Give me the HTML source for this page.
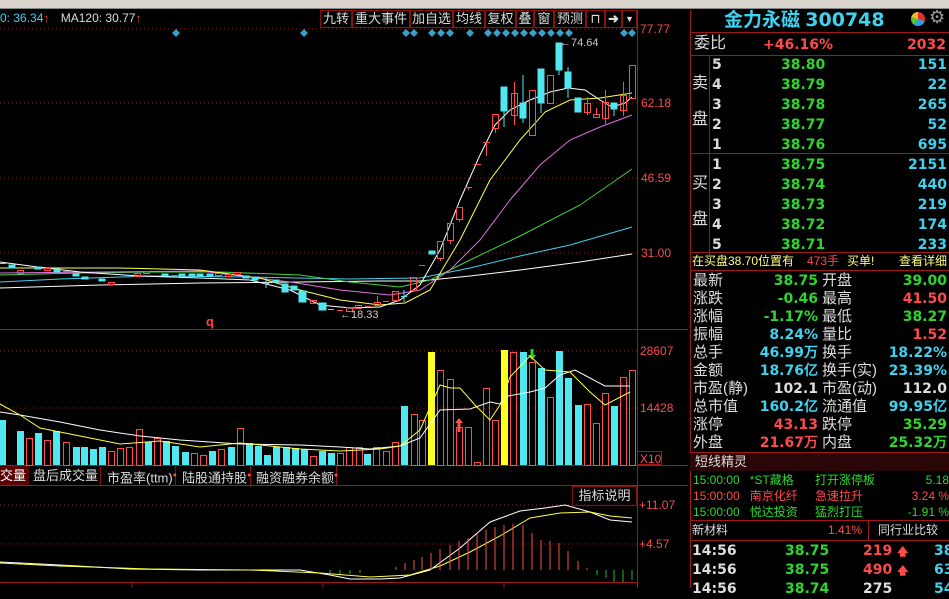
<!DOCTYPE html>
<html><head><meta charset="utf-8"><style>
*{margin:0;padding:0;box-sizing:border-box}
body{width:949px;height:588px;background:#000;overflow:hidden;position:relative;font-family:"Liberation Sans","Noto Sans CJK SC",sans-serif;color:#ddd}
.a{position:absolute;white-space:nowrap}
.g{color:#2fd52f}.r{color:#ff4a4a}.c{color:#3ed2ef}.w{color:#ddd}.y{color:#ffff40}
.btn{position:absolute;top:10px;height:18px;border:1px solid #8b1010;color:#ddd;font-size:13px;line-height:16px;text-align:center;background:#000}
.rp .a{font-size:14px;line-height:18px}
.num{font-weight:bold;font-family:"DejaVu Sans","Liberation Sans",sans-serif;font-size:13px}
</style></head><body>
<!-- top toolbar remnant -->
<div class="a" style="left:0;top:0;width:949px;height:9px;background:#d8d4cc;border-bottom:1px solid #888"></div>
<div class="a" style="left:0;top:10px;font-size:12px;line-height:16px"><span class="c">0: 36.34</span><span class="r">↑</span> <span class="w" style="margin-left:8px">MA120: 30.77</span><span class="r">↑</span></div>
<div class="btn" style="left:320px;width:32px">九转</div>
<div class="btn" style="left:352px;width:58px">重大事件</div>
<div class="btn" style="left:410px;width:43px">加自选</div>
<div class="btn" style="left:453px;width:32px">均线</div>
<div class="btn" style="left:485px;width:31px">复权</div>
<div class="btn" style="left:516px;width:18px">叠</div>
<div class="btn" style="left:534px;width:20px">窗</div>
<div class="btn" style="left:554px;width:32px">预测</div>
<div class="btn" style="left:586px;width:19px">⊓</div>
<div class="btn" style="left:605px;width:17px;font-weight:bold">➜</div>
<div class="btn" style="left:622px;width:15px;font-size:9px">▼</div>

<svg class="a" style="left:0;top:0" width="688" height="588" viewBox="0 0 688 588">
<g stroke="#8b1a1a" stroke-dasharray="1 3" stroke-width="1">
<line x1="0" y1="29" x2="637" y2="29"/><line x1="0" y1="103" x2="637" y2="103"/><line x1="0" y1="178" x2="637" y2="178"/><line x1="0" y1="253" x2="637" y2="253"/>
<line x1="0" y1="351" x2="637" y2="351"/><line x1="0" y1="408" x2="637" y2="408"/>
<line x1="0" y1="505" x2="637" y2="505"/><line x1="0" y1="544" x2="637" y2="544"/>
</g>
<g stroke="#a01818" stroke-width="1">
<line x1="637.5" y1="10" x2="637.5" y2="588"/>
<line x1="0" y1="329.5" x2="688" y2="329.5"/>
<line x1="0" y1="465.5" x2="688" y2="465.5"/>
<line x1="0" y1="485.5" x2="688" y2="485.5"/>
<line x1="0" y1="582.5" x2="637" y2="582.5"/>
</g>
<!-- diamonds -->
<g fill="#3aa0c8">
<path d="M176 29l4 4-4 4-4-4z"/><path d="M304 29l4 4-4 4-4-4z"/>
<path d="M406 29l4 4-4 4-4-4z"/><path d="M414 29l4 4-4 4-4-4z"/><path d="M432 29l4 4-4 4-4-4z"/><path d="M441 29l4 4-4 4-4-4z"/><path d="M450 29l4 4-4 4-4-4z"/><path d="M470 29l4 4-4 4-4-4z"/>
<path d="M488 29l4 4-4 4-4-4z"/><path d="M497 29l4 4-4 4-4-4z"/><path d="M506 29l4 4-4 4-4-4z"/><path d="M515 29l4 4-4 4-4-4z"/><path d="M524 29l4 4-4 4-4-4z"/><path d="M533 29l4 4-4 4-4-4z"/><path d="M542 29l4 4-4 4-4-4z"/><path d="M551 29l4 4-4 4-4-4z"/><path d="M560 29l4 4-4 4-4-4z"/><path d="M569 29l4 4-4 4-4-4z"/>
<path d="M624 29l4 4-4 4-4-4z"/><path d="M632 29l4 4-4 4-4-4z"/>
</g>
<!-- MA lines -->
<g fill="none" stroke-width="1">
<polyline stroke="#40d0f0" points="0,282 60,279 150,276 250,277 350,279 420,278 470,268 520,256 570,245 632,227"/>
<polyline stroke="#ffffff" points="0,288 100,285 200,283 300,282 380,281 420,281 470,276 520,270 580,262 632,254"/>
<polyline stroke="#40d040" points="0,275 80,273 150,272 220,272 300,275 350,282 400,287 430,280 470,260 520,236 580,205 632,169"/>
<polyline stroke="#e070e0" points="0,273 100,272 200,271 290,282 340,290 390,295 420,290 450,270 480,240 510,200 540,165 570,140 600,127 632,115"/>
<polyline stroke="#ffff50" points="0,268 60,268 120,268 200,270 260,278 300,290 340,300 380,305 405,303 430,290 460,240 490,180 520,140 545,112 570,100 600,98 632,93"/>
<polyline stroke="#ffffff" points="0,262 30,266 80,272 140,276 200,278 250,280 290,290 320,305 350,308 380,307 400,300 420,285 440,250 460,200 480,155 495,125 510,110 530,100 550,92 568,88 585,90 600,100 612,107 625,103 632,97"/>
</g>
<!-- candles -->
<g stroke="#ff4a4a" fill="none" stroke-width="1">
<rect x="392.5" y="291.5" width="6" height="9"/>
<rect x="410.5" y="277.5" width="6" height="13"/>
<line x1="419" y1="265.5" x2="425" y2="265.5"/>
<rect x="437.5" y="241.5" width="6" height="17"/><line x1="440.5" y1="258" x2="440.5" y2="261"/>
<rect x="447.5" y="223.5" width="6" height="17"/><line x1="450.5" y1="240" x2="450.5" y2="244"/>
<rect x="456.5" y="207.5" width="6" height="12"/><line x1="459.5" y1="219" x2="459.5" y2="222"/>
<line x1="465" y1="187.5" x2="472" y2="187.5"/><line x1="468.5" y1="187" x2="468.5" y2="190"/>
<line x1="474" y1="164.5" x2="481" y2="164.5"/>
<line x1="483" y1="142.5" x2="490" y2="142.5"/><line x1="486.5" y1="142" x2="486.5" y2="156"/>
<rect x="492.5" y="114.5" width="6" height="14"/><line x1="495.5" y1="128" x2="495.5" y2="133"/>
<rect x="511.5" y="93.5" width="6" height="22"/><line x1="514.5" y1="82" x2="514.5" y2="125"/>
<rect x="529.5" y="90.5" width="6" height="45"/>
<rect x="547.5" y="75.5" width="6" height="28"/>
<rect x="584.5" y="103.5" width="6" height="9"/><line x1="587.5" y1="97" x2="587.5" y2="115"/>
<rect x="593.5" y="114.5" width="6" height="3"/><line x1="596.5" y1="108" x2="596.5" y2="114"/>
<rect x="602.5" y="102.5" width="6" height="16"/><line x1="605.5" y1="90" x2="605.5" y2="124"/>
<rect x="620.5" y="95.5" width="6" height="15"/><line x1="623.5" y1="82" x2="623.5" y2="116"/>
<rect x="629.5" y="65.5" width="6" height="33"/>
<!-- left small reds -->
<rect x="17.5" y="270.5" width="6" height="3"/><rect x="44.5" y="268.5" width="6" height="2"/><rect x="63.5" y="271.5" width="6" height="2"/>
<rect x="108.5" y="282.5" width="6" height="2"/><rect x="134.5" y="273.5" width="6" height="3"/><rect x="143.5" y="271.5" width="6" height="2"/>
<rect x="171.5" y="275.5" width="6" height="2"/><rect x="215.5" y="273.5" width="6" height="2"/><rect x="225.5" y="274.5" width="6" height="2"/><rect x="234.5" y="272.5" width="6" height="2"/>
<rect x="310.5" y="300.5" width="6" height="3"/><line x1="337" y1="310.5" x2="343" y2="310.5"/><rect x="346.5" y="307.5" width="6" height="4"/><rect x="355.5" y="305.5" width="6" height="3"/><line x1="365" y1="306.5" x2="371" y2="306.5"/>
<rect x="374.5" y="302.5" width="6" height="3"/><line x1="377.5" y1="296" x2="377.5" y2="302"/><line x1="383" y1="301.5" x2="389" y2="301.5"/>
</g>
<g fill="#50e8f0" stroke="#50e8f0" stroke-width="1">
<line x1="404" y1="290" x2="404" y2="302"/><line x1="401" y1="296.5" x2="407" y2="296.5"/>
<rect x="429" y="251" width="6" height="3"/>
<rect x="501" y="87" width="6" height="24"/><line x1="504" y1="111" x2="504" y2="127"/>
<rect x="520" y="103" width="6" height="15"/><line x1="523" y1="75" x2="523" y2="123"/>
<rect x="538" y="69" width="6" height="34"/><line x1="541" y1="103" x2="541" y2="113"/>
<rect x="556" y="43" width="6" height="27"/><line x1="559" y1="70" x2="559" y2="75"/>
<rect x="565" y="72" width="6" height="16"/><line x1="568" y1="67" x2="568" y2="98"/>
<rect x="575" y="98" width="6" height="14"/>
<rect x="611" y="103" width="6" height="6"/><line x1="614" y1="109" x2="614" y2="116"/>
<line x1="0" y1="263.5" x2="6" y2="263.5"/><rect x="9" y="265" width="6" height="3"/><rect x="35" y="267" width="6" height="2"/><rect x="54" y="269" width="6" height="3"/>
<rect x="73" y="274" width="6" height="2"/><rect x="82" y="277" width="6" height="2"/><rect x="99" y="279" width="6" height="2"/>
<rect x="162" y="274" width="6" height="2"/><rect x="179" y="274" width="6" height="2"/><rect x="189" y="274" width="6" height="2"/><rect x="197" y="274" width="6" height="2"/><rect x="207" y="274" width="6" height="2"/>
<rect x="243" y="276" width="6" height="2"/><rect x="252" y="277" width="6" height="3"/><line x1="266" y1="278" x2="266" y2="288"/><line x1="263" y1="283.5" x2="269" y2="283.5"/>
<rect x="273" y="280" width="6" height="2"/><rect x="282" y="284" width="6" height="8"/><rect x="291" y="286" width="6" height="4"/>
<rect x="299" y="291" width="7" height="11"/><rect x="319" y="303" width="7" height="7"/><line x1="328" y1="309.5" x2="334" y2="309.5"/>
</g>
<text x="560" y="46" fill="#ccc" font-size="11" font-family="Liberation Sans">←74.64</text>
<text x="340" y="318" fill="#ccc" font-size="11" font-family="Liberation Sans">←18.33</text>
<text x="206" y="326" fill="#ff4040" font-size="13" font-weight="bold" font-family="Liberation Sans">q</text>
<!-- axis labels -->
<g font-family="Liberation Sans" font-size="12" fill="#ff4a4a">
<text x="640" y="33">77.77</text><text x="641" y="107">62.18</text><text x="641" y="182">46.59</text><text x="641" y="257">31.00</text>
<text x="640" y="355">28607</text><text x="640" y="412">14428</text><text x="640" y="463">X10</text>
<text x="639" y="509">+11.07</text><text x="639" y="548">+4.57</text>
</g>
<rect x="637.5" y="451.5" width="24" height="13" fill="none" stroke="#a01818"/>
<!-- volume bars -->
<g fill="#50e8f0">
<rect x="-1" y="420" width="7" height="45"/><rect x="17" y="431" width="7" height="34"/><rect x="35" y="433" width="7" height="32"/><rect x="53" y="431" width="7" height="34"/>
<rect x="73" y="447" width="7" height="18"/><rect x="81" y="447" width="7" height="18"/><rect x="90" y="449" width="7" height="16"/><rect x="99" y="447" width="7" height="18"/>
<rect x="145" y="442" width="7" height="23"/><rect x="163" y="441" width="7" height="24"/><rect x="172" y="446" width="7" height="19"/><rect x="182" y="452" width="7" height="13"/>
<rect x="209" y="451" width="7" height="14"/><rect x="228" y="447" width="7" height="18"/><rect x="246" y="443" width="7" height="22"/><rect x="255" y="446" width="7" height="19"/>
<rect x="264" y="455" width="7" height="10"/><rect x="273" y="447" width="7" height="18"/><rect x="283" y="447" width="7" height="18"/><rect x="292" y="448" width="7" height="17"/><rect x="301" y="449" width="7" height="16"/>
<rect x="319" y="451" width="7" height="14"/><rect x="328" y="453" width="7" height="12"/><rect x="364" y="454" width="7" height="11"/>
<rect x="401" y="406" width="7" height="59"/><rect x="520" y="352" width="7" height="113"/><rect x="538" y="368" width="7" height="97"/>
<rect x="556" y="351" width="7" height="114"/><rect x="565" y="378" width="7" height="87"/><rect x="575" y="405" width="7" height="60"/><rect x="611" y="406" width="7" height="59"/>
</g>
<g fill="#ffff20"><rect x="428" y="352" width="7" height="113"/><rect x="501" y="350" width="7" height="115"/></g>
<g fill="none" stroke="#ff4a4a" stroke-width="1">
<rect x="26.5" y="438.5" width="6" height="27"/><rect x="44.5" y="440.5" width="6" height="25"/><rect x="63.5" y="442.5" width="6" height="23"/>
<rect x="108.5" y="451.5" width="6" height="14"/><rect x="117.5" y="448.5" width="6" height="17"/><rect x="126.5" y="447.5" width="6" height="18"/><rect x="136.5" y="429.5" width="6" height="36"/>
<rect x="154.5" y="438.5" width="6" height="27"/><rect x="191.5" y="453.5" width="6" height="12"/><rect x="200.5" y="455.5" width="6" height="10"/><rect x="218.5" y="449.5" width="6" height="16"/>
<rect x="237.5" y="428.5" width="6" height="37"/><rect x="310.5" y="456.5" width="6" height="9"/><rect x="337.5" y="453.5" width="6" height="12"/><rect x="346.5" y="447.5" width="6" height="18"/>
<rect x="356.5" y="447.5" width="6" height="18"/><rect x="373.5" y="447.5" width="6" height="18"/><rect x="383.5" y="451.5" width="6" height="14"/><rect x="392.5" y="442.5" width="6" height="23"/>
<rect x="411.5" y="414.5" width="6" height="51"/><rect x="419.5" y="420.5" width="6" height="45"/><rect x="437.5" y="370.5" width="6" height="95"/><rect x="447.5" y="379.5" width="6" height="86"/>
<rect x="456.5" y="427.5" width="6" height="38"/><rect x="465.5" y="427.5" width="6" height="38"/><rect x="474.5" y="462.5" width="6" height="3"/><rect x="483.5" y="388.5" width="6" height="77"/>
<rect x="492.5" y="420.5" width="6" height="45"/><rect x="510.5" y="352.5" width="6" height="113"/><rect x="529.5" y="362.5" width="6" height="103"/><rect x="547.5" y="397.5" width="6" height="68"/>
<rect x="584.5" y="404.5" width="6" height="61"/><rect x="593.5" y="423.5" width="6" height="42"/><rect x="602.5" y="393.5" width="6" height="72"/><rect x="620.5" y="377.5" width="6" height="88"/><rect x="629.5" y="370.5" width="6" height="95"/>
</g>
<path d="M459 418l-4 5h2.5v9h3v-9h2.5z" fill="#ff5050"/>
<path d="M532 360l-4-5h2.5v-6h3v6h2.5z" fill="#20e020"/>
<g fill="none" stroke-width="1">
<polyline stroke="#ffffff" points="0,412 20,415 60,422 100,430 140,436 180,440 240,444 300,445 340,447 370,449 400,446 420,438 440,410 470,409 490,402 500,404 508,396 530,392 545,388 560,375 575,370 590,378 605,386 630,386"/>
<polyline stroke="#ffff40" points="0,404 20,415 40,428 70,434 100,440 120,444 160,441 200,447 240,443 270,446 300,449 340,451 380,449 400,446 420,430 440,385 450,388 460,388 475,405 490,420 500,405 510,377 530,356 545,370 570,372 590,392 605,405 630,392"/>
</g>
<!-- MACD -->
<g fill="none" stroke-width="1">
<polyline stroke="#ffffff" points="0,562 60,565 130,569 200,570 300,570 330,575 350,579 380,579 400,578 430,570 460,548 490,522 520,511 545,508 565,505 590,512 610,520 632,522"/>
<polyline stroke="#ffff40" points="0,563 60,566 150,569 250,570 320,573 370,577 410,575 440,566 470,552 500,536 530,518 560,513 590,512 610,516 632,518"/>
</g>
<g stroke="#ff4a4a" stroke-width="1">
<line x1="396" y1="570" x2="396" y2="567"/><line x1="405" y1="570" x2="405" y2="563"/><line x1="414" y1="570" x2="414" y2="560"/><line x1="422" y1="570" x2="422" y2="557"/><line x1="431" y1="570" x2="431" y2="553"/>
<line x1="440" y1="570" x2="440" y2="549"/><line x1="450" y1="570" x2="450" y2="545"/><line x1="459" y1="570" x2="459" y2="541"/><line x1="468" y1="570" x2="468" y2="538"/><line x1="477" y1="570" x2="477" y2="534"/>
<line x1="486" y1="570" x2="486" y2="530"/><line x1="495" y1="570" x2="495" y2="527"/><line x1="504" y1="570" x2="504" y2="525"/><line x1="513" y1="570" x2="513" y2="524"/><line x1="523" y1="570" x2="523" y2="525"/>
<line x1="532" y1="570" x2="532" y2="533"/><line x1="541" y1="570" x2="541" y2="540"/><line x1="550" y1="570" x2="550" y2="541"/><line x1="559" y1="570" x2="559" y2="543"/><line x1="568" y1="570" x2="568" y2="551"/>
<line x1="578" y1="570" x2="578" y2="561"/><line x1="587" y1="570" x2="587" y2="568"/>
</g>
<g stroke="#20c020" stroke-width="1">
<line x1="597" y1="570" x2="597" y2="575"/><line x1="606" y1="570" x2="606" y2="578"/><line x1="614" y1="570" x2="614" y2="582"/><line x1="623" y1="570" x2="623" y2="582"/><line x1="632" y1="570" x2="632" y2="580"/>
<line x1="330" y1="570" x2="330" y2="574"/><line x1="340" y1="570" x2="340" y2="574"/><line x1="350" y1="570" x2="350" y2="574"/><line x1="360" y1="570" x2="360" y2="573"/>
</g>
<g stroke="#a01818"><line x1="132" y1="582" x2="132" y2="588"/><line x1="323" y1="582" x2="323" y2="588"/><line x1="504" y1="582" x2="504" y2="588"/></g>
</svg>

<!-- tabs -->
<div class="a" style="left:0;top:466px;width:29px;height:19px;background:#5a0000;color:#fff;font-size:13px;line-height:19px">交量</div>
<div class="a" style="left:29px;top:466px;width:72px;height:19px;border-right:1px solid #8b1010;font-size:13px;line-height:19px;padding-left:4px;color:#ddd">盘后成交量</div>
<div class="a" style="left:101px;top:466px;width:75px;height:19px;border-right:1px solid #8b1010;font-size:13px;line-height:19px;padding-left:6px;color:#ddd">市盈率(ttm)<sup class="r" style="font-size:7px">●</sup></div>
<div class="a" style="left:176px;top:466px;width:75px;height:19px;border-right:1px solid #8b1010;font-size:13px;line-height:19px;padding-left:6px;color:#ddd">陆股通持股<sup class="r" style="font-size:7px">●</sup></div>
<div class="a" style="left:251px;top:466px;width:86px;height:19px;border-right:1px solid #8b1010;font-size:13px;line-height:19px;padding-left:5px;color:#ddd">融资融券余额<sup class="r" style="font-size:7px">●</sup></div>
<div class="a" style="left:572px;top:486px;width:65px;height:20px;border:1px solid #8b1010;font-size:13px;line-height:18px;text-align:center;color:#ddd">指标说明</div>

<!-- right panel -->
<div class="rp">
<div class="a" style="left:690px;top:10px;width:1px;height:578px;background:#a01818"></div>
<div class="a" style="left:724px;top:8px;font-size:19px;line-height:24px;color:#3ed2ef;font-weight:bold">金力永磁 <span style="font-family:'DejaVu Sans',sans-serif">300748</span></div>
<div class="a" style="left:911px;top:12px;width:14px;height:14px;border-radius:50%;background:conic-gradient(#e03030 0 30%,#30a0e0 30% 60%,#60c030 60% 80%,#f0c020 80%)"></div>
<div class="a" style="left:929px;top:8px;font-size:18px;color:#999">⚙</div>
<div class="a" style="left:690px;top:32px;width:259px;height:1px;background:#a01818"></div>
<div class="a w" style="left:694px;top:34px;font-size:16px;line-height:20px">委比</div>
<div class="a r num" style="left:763px;top:36px">+46.16%</div>
<div class="a r num" style="right:3px;top:36px">2032</div>
<div class="a" style="left:690px;top:55px;width:259px;height:1px;background:#a01818"></div>
<div class="a" style="left:709px;top:55px;width:1px;height:200px;background:#a01818"></div>
<div class="a" style="left:690px;top:153px;width:259px;height:1px;background:#a01818"></div>
<div class="a w" style="left:692px;top:74px;font-size:16px;line-height:20px">卖</div>
<div class="a w" style="left:692px;top:110px;font-size:16px;line-height:20px">盘</div>
<div class="a w" style="left:692px;top:174px;font-size:16px;line-height:20px">买</div>
<div class="a w" style="left:692px;top:210px;font-size:16px;line-height:20px">盘</div>
<div class="a w num" style="left:712px;top:55px;line-height:20px">5<br>4<br>3<br>2<br>1<br>1<br>2<br>3<br>4<br>5</div>
<div class="a g num" style="left:781px;top:55px;line-height:20px">38.80<br>38.79<br>38.78<br>38.77<br>38.76<br>38.75<br>38.74<br>38.73<br>38.72<br>38.71</div>
<div class="a c num" style="right:2px;top:55px;line-height:20px;text-align:right">151<br>22<br>265<br>52<br>695<br>2151<br>440<br>219<br>174<br>233</div>
<div class="a" style="left:690px;top:252px;width:259px;height:1px;background:#a01818"></div>
<div class="a" style="left:692px;top:253px;font-size:12px;line-height:16px;color:#ffff80">在买盘38.70位置有</div>
<div class="a r" style="left:807px;top:253px;font-size:12px;line-height:16px">473手</div>
<div class="a" style="left:847px;top:253px;font-size:12px;line-height:16px;color:#ffff80">买单!</div>
<div class="a" style="left:899px;top:253px;font-size:12px;line-height:16px;color:#ffff80">查看详细</div>
<div class="a" style="left:690px;top:270px;width:259px;height:1px;background:#a01818"></div>
<div class="a w" style="left:693px;top:272px;font-size:15px;line-height:18px">最新<br>涨跌<br>涨幅<br>振幅<br>总手<br>金额<br>市盈(静)<br>总市值<br>涨停<br>外盘</div>
<div class="a w" style="left:822px;top:272px;font-size:15px;line-height:18px">开盘<br>最高<br>最低<br>量比<br>换手<br>换手(实)<br>市盈(动)<br>流通值<br>跌停<br>内盘</div>
<div class="a num" style="right:131px;top:272px;line-height:18px;text-align:right"><span class="g">38.75</span><br><span class="g">-0.46</span><br><span class="g">-1.17%</span><br><span class="c">8.24%</span><br><span class="c">46.99万</span><br><span class="c">18.76亿</span><br><span class="w">102.1</span><br><span class="c">160.2亿</span><br><span class="r">43.13</span><br><span class="r">21.67万</span></div>
<div class="a num" style="right:2px;top:272px;line-height:18px;text-align:right"><span class="g">39.00</span><br><span class="r">41.50</span><br><span class="g">38.27</span><br><span class="r">1.52</span><br><span class="c">18.22%</span><br><span class="c">23.39%</span><br><span class="w">112.0</span><br><span class="c">99.95亿</span><br><span class="g">35.29</span><br><span class="g">25.32万</span></div>
<div class="a" style="left:690px;top:452px;width:259px;height:19px;background:#2a0606;border-top:1px solid #a01818"></div>
<div class="a w" style="left:695px;top:453px;font-size:13px;line-height:17px">短线精灵</div>
<div class="a" style="left:693px;top:472px;font-size:12px;line-height:16px"><span class="g">15:00:00</span><span class="g" style="margin-left:10px">*ST藏格</span><br><span class="r">15:00:00</span><span class="r" style="margin-left:10px">南京化纤</span><br><span class="g">15:00:00</span><span class="g" style="margin-left:10px">悦达投资</span></div>
<div class="a" style="left:815px;top:472px;font-size:12px;line-height:16px"><span class="g">打开涨停板</span><br><span class="r">急速拉升</span><br><span class="g">猛烈打压</span></div>
<div class="a" style="right:0;top:472px;font-size:12px;line-height:16px;text-align:right"><span class="g">5.18</span><br><span class="r">3.24 %</span><br><span class="g">-1.91 %</span></div>
<div class="a" style="left:690px;top:520px;width:259px;height:1px;background:#a01818"></div>
<div class="a" style="left:868px;top:520px;width:1px;height:20px;background:#a01818"></div>
<div class="a w" style="left:692px;top:522px;font-size:12px;line-height:17px">新材料</div>
<div class="a r" style="left:828px;top:522px;font-size:12px;line-height:17px">1.41%</div>
<div class="a w" style="left:878px;top:522px;font-size:12px;line-height:17px">同行业比较</div>
<div class="a" style="left:690px;top:540px;width:259px;height:1px;background:#a01818"></div>
<div class="a w num" style="left:692px;top:542px;line-height:19px">14:56<br>14:56<br>14:56</div>
<div class="a g num" style="left:785px;top:542px;line-height:19px">38.75<br>38.75<br>38.74</div>
<div class="a num" style="left:863px;top:542px;line-height:19px"><span class="r">219 <span style="font-size:11px">🡅</span></span><br><span class="r">490 <span style="font-size:11px">🡅</span></span><br><span class="w">275</span></div>
<div class="a c num" style="left:934px;top:542px;line-height:19px">38<br>63<br>54</div>
</div>
</body></html>
